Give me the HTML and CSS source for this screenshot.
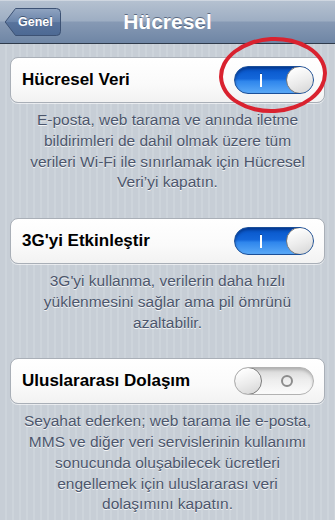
FILE: index.html
```html
<html>
<head>
    <meta charset="utf-8">
    <link rel="stylesheet" href="styles.css">
</head>
<body>
    <div class="navbar">
        <div class="nav-side">
            <a class="back">
                <svg class="back-shape" width="58" height="30" viewBox="0 0 58 30">
                    <defs>
                        <linearGradient id="backFill" x1="0" y1="0" x2="0" y2="1">
                            <stop offset="0" stop-color="#90a4c1"/>
                            <stop offset="0.5" stop-color="#6a84aa"/>
                            <stop offset="0.52" stop-color="#58739c"/>
                            <stop offset="1" stop-color="#4d6993"/>
                        </linearGradient>
                    </defs>
                    <path d="M1.2 15 L11.5 1.5 H52.5 Q56.5 1.5 56.5 5.5 V24.5 Q56.5 28.5 52.5 28.5 H11.5 Z" fill="url(#backFill)" stroke="#3d5274" stroke-width="1"/>
                </svg>
                <span class="back-label">Genel</span>
            </a>
        </div>
        <h1 class="title">Hücresel</h1>
        <div class="nav-side"></div>
    </div>

    <div class="content">
        <section class="group">
            <div class="cell">
                <span class="label">Hücresel Veri</span>
                <div class="switch on">
                    <span class="mark"><i class="bar"></i></span>
                    <span class="knob"></span>
                </div>
                <span class="annotation"></span>
            </div>
            <p class="note">E-posta, web tarama ve anında iletme bildirimleri de dahil olmak üzere tüm verileri Wi-Fi ile sınırlamak için Hücresel Veri’yi kapatın.</p>
        </section>

        <section class="group">
            <div class="cell">
                <span class="label">3G'yi Etkinleştir</span>
                <div class="switch on">
                    <span class="mark"><i class="bar"></i></span>
                    <span class="knob"></span>
                </div>
            </div>
            <p class="note">3G'yi kullanma, verilerin daha hızlı yüklenmesini sağlar ama pil ömrünü azaltabilir.</p>
        </section>

        <section class="group">
            <div class="cell">
                <span class="label">Uluslararası Dolaşım</span>
                <div class="switch off">
                    <span class="knob"></span>
                    <span class="mark"><i class="ring"></i></span>
                </div>
            </div>
            <p class="note">Seyahat ederken; web tarama ile e-posta, MMS ve diğer veri servislerinin kullanımı sonucunda oluşabilecek ücretleri engellemek için uluslararası veri dolaşımını kapatın.</p>
        </section>
    </div>
</body>
</html>
```

FILE: styles.css
```css
body {
    margin: 0;
    width: 335px;
    height: 520px;
    overflow: hidden;
    font-family: "Liberation Sans", Arial, sans-serif;
    background: repeating-linear-gradient(90deg, #c7ced6 0, #c7ced6 5px, #cdd4db 5px, #cdd4db 7px);
}
.navbar {
    height: 43px;
    display: grid;
    grid-template-columns: 1fr auto 1fr;
    align-items: center;
    background: linear-gradient(#b6c2d1, #9eaec3 48%, #8699b4 52%, #6f86a5);
    border-bottom: 1px solid #2f3b4b;
    box-shadow: inset 0 1px 0 rgba(255, 255, 255, 0.35);
}
.nav-side {
    display: flex;
    align-items: center;
    padding-left: 4px;
}
.back {
    display: grid;
    width: 58px;
    height: 30px;
    margin-top: 0;
}
.back-shape,
.back-label {
    grid-area: 1 / 1;
}
.back-label {
    align-self: center;
    padding-left: 14px;
    font-size: 12.5px;
    font-weight: bold;
    color: #fff;
    text-shadow: 0 -1px 0 rgba(30, 45, 70, 0.6);
}
.title {
    margin: 0;
    font-size: 21px;
    font-weight: bold;
    color: #fff;
    text-shadow: 0 -1px 0 rgba(60, 75, 100, 0.7);
}
.content {
    padding-top: 13px;
}
.group {
    margin-bottom: 25px;
}
.cell {
    position: relative;
    height: 44px;
    margin: 0 10px;
    padding: 0 10px 0 11px;
    display: flex;
    align-items: center;
    justify-content: space-between;
    background: linear-gradient(#ffffff, #fafafa 60%, #f2f2f2);
    border: 1px solid #a9afb7;
    border-radius: 8px;
    box-shadow: 0 1px 0 rgba(255, 255, 255, 0.6);
}
.label {
    font-size: 17px;
    font-weight: bold;
    color: #000;
}
.switch {
    width: 80px;
    height: 28px;
    box-sizing: border-box;
    border-radius: 14px;
    display: flex;
    align-items: center;
    overflow: hidden;
}
.switch.on {
    background: linear-gradient(#0654c8, #1467da 45%, #2f86ec 55%, #5aa9f7);
    border: 1px solid #1b4f98;
    box-shadow: inset 0 2px 3px rgba(0, 20, 70, 0.45);
}
.switch.off {
    background: linear-gradient(#d6d6d6, #ededed 45%, #fbfbfb);
    border: 1px solid #b2b2b2;
    box-shadow: inset 0 2px 3px rgba(0, 0, 0, 0.18);
}
.mark {
    flex: 1;
    display: flex;
    justify-content: center;
    align-items: center;
}
.bar {
    width: 2px;
    height: 13px;
    background: #fff;
    box-shadow: 0 -1px 0 rgba(0, 30, 90, 0.4);
}
.ring {
    width: 8px;
    height: 8px;
    border: 2px solid #8c8c8c;
    border-radius: 50%;
}
.knob {
    width: 28px;
    height: 28px;
    margin: -1px;
    box-sizing: border-box;
    border-radius: 50%;
    border: 1px solid #7a7a7a;
    background: linear-gradient(160deg, #ffffff 10%, #ececec 55%, #d4d4d4);
    box-shadow: inset 0 1px 1px rgba(255, 255, 255, 0.9);
}
.annotation {
    position: absolute;
    left: 208px;
    top: -21px;
    width: 100px;
    height: 68px;
    border: 4px solid #d9222f;
    border-radius: 50%;
    transform: rotate(-3deg);
}
.note {
    margin: 0;
    padding: 7px 21px 0;
    font-size: 15.5px;
    line-height: 20.75px;
    text-align: center;
    color: #4c566c;
    text-shadow: 0 1px 0 rgba(255, 255, 255, 0.8);
}
```
